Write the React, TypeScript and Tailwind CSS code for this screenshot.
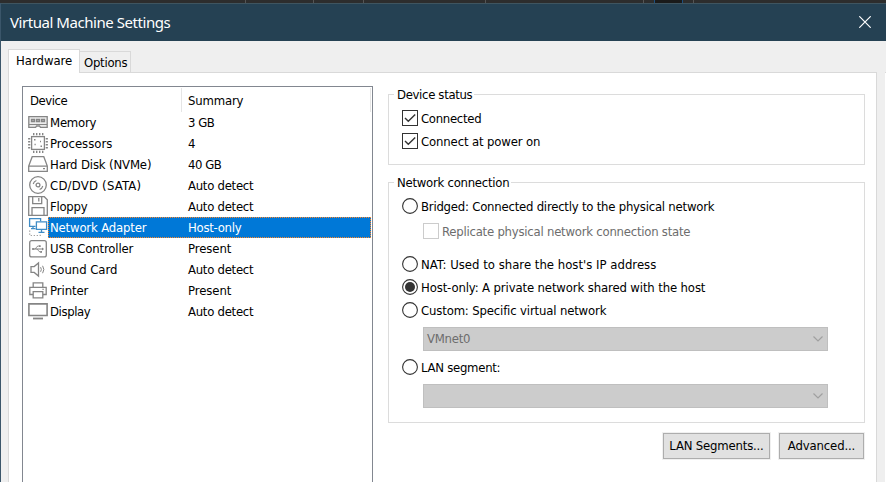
import { ReactNode, useLayoutEffect, useRef, useState } from "react";

const BODY = "font-['DejaVu_Sans_Condensed','DejaVu_Sans',sans-serif] [font-stretch:condensed] text-[13px]";

/* A single-line label whose tracking is adjusted so it spans `w` pixels. */
function Label({ children, w, className = "" }: { children: string; w: number; className?: string }) {
  const ref = useRef<HTMLSpanElement>(null);
  const [tracking, setTracking] = useState(0);
  useLayoutEffect(() => {
    const el = ref.current;
    if (!el) return;
    const natural = el.getBoundingClientRect().width - tracking * children.length;
    setTracking((w + 0.3 - natural) / children.length);
  }, [children, w]);
  return (
    <span ref={ref} className={`inline-block whitespace-pre ${className}`} style={{ letterSpacing: `${tracking}px` }}>
      {children}
    </span>
  );
}

function Glyph({ children, color = "#858585" }: { children: ReactNode; color?: string }) {
  return (
    <svg width="20" height="21" viewBox="0 0 20 21" fill="none" stroke={color} strokeWidth="1.3" className="shrink-0">
      {children}
    </svg>
  );
}

const icons: Record<string, ReactNode> = {
  memory: (
    <Glyph>
      <path d="M.8 4.7h18.4v10.6h-6.7l-1-1.3H8.6l-1 1.3H.8z" fill="#ececec" />
      <path d="M1 12.5h18" strokeWidth="1" />
      <path d="M3.5 7.5h3v2h-3zM8.5 7.5h3v2h-3zM13.5 7.5h3v2h-3z" fill="#c8c8c8" />
    </Glyph>
  ),
  cpu: (
    <Glyph>
      <rect x="3.6" y="3.6" width="12.8" height="12.8" />
      <path d="M5 1.2h11M5 18.8h11" strokeWidth="2.2" strokeDasharray="1.4 1.6" />
      <path d="M1.2 5v11M18.8 5v11" strokeWidth="2.2" strokeDasharray="1.4 1.6" />
      <path d="M6 6.7h1.5M12.5 13.3h1.5M6.5 11.5h1.2M12 8.5h1" strokeWidth="1.5" />
    </Glyph>
  ),
  disk: (
    <Glyph>
      <path d="M4.2 2.7h11.6L19.3 12v5.3H.7V12zM.7 12.2h18.6" />
      <path d="M15 14.7h2" />
    </Glyph>
  ),
  cd: (
    <Glyph>
      <circle cx="10" cy="10" r="8.3" />
      <circle cx="10" cy="10" r="1.9" />
      <path d="M5.2 9a5 5 0 0 1 3.2-3.5M14.8 11a5 5 0 0 1-3.2 3.5" strokeWidth="1.1" />
    </Glyph>
  ),
  floppy: (
    <Glyph>
      <path d="M.7.7h15.6l3 3v15.6H.7zM4.7.7v7h9v-7M4 19V11.6h12V19M10.8 2v3.4" />
    </Glyph>
  ),
  network: (
    <Glyph color="#3f8cc6">
      <path d="M7.5 9.3H1.6V1.6h11v2.6" />
      <path d="M3 11.6h4.5M5 9.3v2.3" />
      <path d="M8.4 4.8h10.2v7.6H8.4z" fill="#fff" />
      <path d="M13.5 12.5v2.3M10.5 15.3h6" />
      <path d="M1.7 13.5v5h10.5v-2" stroke="#9a9a9a" strokeDasharray="1.2 1.8" strokeWidth="1.2" />
    </Glyph>
  ),
  usb: (
    <Glyph>
      <rect x="1.7" y="2.7" width="16.6" height="16.2" rx="2" />
      <path d="M5 11h9.5M6.5 11c2 0 1.7-3 4-3h1M8.5 11c2 0 1.7 3 4 3h1" strokeWidth="1" />
      <path d="M14 9.6l2.1 1.4-2.1 1.4zM11 7.2h1.7v1.7H11zM12.3 13.1H14v1.7h-1.7z" fill="#858585" stroke="none" />
      <circle cx="5" cy="11" r="1.1" fill="#858585" stroke="none" />
    </Glyph>
  ),
  sound: (
    <Glyph>
      <path d="M3 7.6h3.2l4.3-3.6v13l-4.3-3.6H3z" />
      <path d="M12.6 8.2q1.5 2.3 0 4.6M14.6 6.8q2.5 3.7 0 7.4" strokeWidth="1" />
    </Glyph>
  ),
  printer: (
    <Glyph>
      <path d="M5.2 7V2.8h9.6V7M5 14.5H1.8V7.3h16.4v7.2H15" />
      <path d="M5.2 11.7h9.6v6.1H5.2z" />
      <path d="M14.3 9.3h1.6" strokeWidth="1.1" />
    </Glyph>
  ),
  display: (
    <Glyph>
      <path d="M.9 2.9h18.2v11.6H.9z" strokeWidth="1.6" />
      <path d="M5 17.5h10" strokeWidth="1.8" />
    </Glyph>
  ),
};

const devices: [string, string, number, string, number][] = [
  ["memory", "Memory", 46, "3 GB", 26],
  ["cpu", "Processors", 62, "4", 7],
  ["disk", "Hard Disk (NVMe)", 101, "40 GB", 33],
  ["cd", "CD/DVD (SATA)", 91, "Auto detect", 65],
  ["floppy", "Floppy", 37, "Auto detect", 65],
  ["network", "Network Adapter", 96, "Host-only", 53],
  ["usb", "USB Controller", 83, "Present", 43],
  ["sound", "Sound Card", 67, "Auto detect", 65],
  ["printer", "Printer", 38, "Present", 43],
  ["display", "Display", 40, "Auto detect", 65],
];

function DeviceRow({ row, selected }: { row: (typeof devices)[number]; selected: boolean }) {
  const [icon, name, nameW, summary, summaryW] = row;
  return (
    <div className="flex h-[21px] pl-[5px] leading-[21px]">
      {icons[icon]}
      <div
        className={`flex flex-1 ${
          selected ? "bg-[#0078d7] text-white outline-1 -outline-offset-1 outline-dotted outline-[#ff8728]" : ""
        }`}
      >
        <div className="w-[138px] pl-[2px]">
          <Label w={nameW}>{name}</Label>
        </div>
        <div className="pl-[2px]">
          <Label w={summaryW}>{summary}</Label>
        </div>
      </div>
      <div className="w-px" />
    </div>
  );
}

function Check({ label, w, checked, disabled }: { label: string; w: number; checked?: boolean; disabled?: boolean }) {
  return (
    <div className={`flex h-4 items-center gap-[3px] ${disabled ? "text-[#6d6d6d]" : ""}`}>
      <span className={`flex size-4 shrink-0 border ${disabled ? "border-[#cccccc]" : "border-[#333333]"}`}>
        {checked && (
          <svg width="14" height="14" viewBox="0 0 14 14" fill="none" stroke="#333" strokeWidth="1.4">
            <path d="M2 7l3.3 3.3L12.2 3.4" />
          </svg>
        )}
      </span>
      <Label w={w} className="leading-[17px]">{label}</Label>
    </div>
  );
}

function Radio({ label, w, checked }: { label: string; w: number; checked?: boolean }) {
  return (
    <div className="flex h-4 items-center gap-[3px]">
      <svg width="16" height="16" viewBox="0 0 16 16" className="shrink-0">
        <circle cx="8" cy="8" r="7.4" fill="#fff" stroke="#333" strokeWidth="1.1" />
        {checked && <circle cx="8" cy="8" r="5" fill="#333" />}
      </svg>
      <Label w={w} className="leading-[17px]">{label}</Label>
    </div>
  );
}

function Combo({ children }: { children?: ReactNode }) {
  return (
    <div className="ml-[21px] flex h-6 w-[405px] items-center justify-between border border-[#bfbfbf] bg-[#cccccc] pr-[4px] pl-[3px] text-[#6d6d6d]">
      <span className="leading-[24px]">{children}</span>
      <svg width="10" height="6" viewBox="0 0 10 6" fill="none" stroke="#a0a0a0" strokeWidth="1.2">
        <path d="M.5.5L5 5 9.5.5" />
      </svg>
    </div>
  );
}

function Group({ title, w, className, children }: { title: string; w: number; className: string; children: ReactNode }) {
  return (
    <fieldset className={`w-[477px] border border-[#dcdcdc] pl-[13px] ${className}`}>
      <legend className="-ml-[8px] h-[15px] pr-[2px] pl-[3px] leading-[15px]">
        <Label w={w}>{title}</Label>
      </legend>
      {children}
    </fieldset>
  );
}

function Button({ label, w, className }: { label: string; w: number; className: string }) {
  return (
    <button
      className={`flex h-[26px] items-center justify-center border border-[#adadad] bg-[#e1e1e1] leading-[26px] outline-1 outline-[#f0f0f0] ${className}`}
    >
      <Label w={w}>{label}</Label>
    </button>
  );
}

export default function App() {
  return (
    <div className={`flex h-[482px] w-[886px] flex-col overflow-hidden bg-[#efefef] text-black ${BODY}`}>
      {/* sliver of the window behind */}
      <div className="flex h-[3px] shrink-0 bg-[#2d2d2d]">
        <div className="w-[246px] border-r border-[#555]" />
        <div className="w-[68px] border-r border-[#555]" />
        <div className="w-[50px] border-r border-[#555]" />
        <div className="w-[122px] border-r border-[#555]" />
        <div className="w-[158px] border-r border-[#555]" />
        <div className="w-[10px]" />
        <div className="w-[29px] border-x border-[#1c5080] bg-[#1a1a1a]" />
        <div className="w-[11px] border-r border-[#555]" />
      </div>

      <div className="flex min-h-0 flex-1 flex-col border-l border-[#3b566a]">
        <header className="flex h-[38px] shrink-0 items-center justify-between border-t border-[#3f5560] bg-[#254153] pr-[15px] pl-[9px] text-white">
          <Label w={160} className="mb-[2px] font-['Noto_Sans',sans-serif] text-[15px] leading-[34px]">
            Virtual Machine Settings
          </Label>
          <svg width="12" height="12" viewBox="0 0 12 12" stroke="#fff" strokeWidth="1.2" className="mb-px">
            <path d="M.3.3l11.4 11.4M11.7.3L.3 11.7" />
          </svg>
        </header>

        <div className="relative z-10 flex h-8 shrink-0 items-end pl-[7px]">
          <div className="h-6 w-[72px] border-x border-t border-[#d9d9d9] bg-white pl-[7px] leading-[21px]">
            <Label w={56}>Hardware</Label>
          </div>
          <div className="mb-px h-[21px] w-[51px] border-t border-r border-[#d9d9d9] pl-[4px] leading-[21px]">
            <Label w={43}>Options</Label>
          </div>
        </div>

        <div className="-mt-px flex min-h-0 flex-1">
          <div className="ml-[7px] flex w-[869px] shrink-0 gap-[15px] border-x border-t border-[#d9d9d9] bg-white pt-[13px] pl-[13px]">
            <div className="w-[351px] shrink-0 border-x border-t border-[#828790]">
              <div className="flex h-[25px] pt-[1px] leading-[25px]">
                <div className="h-6 w-[159px] border-r border-[#e5e5e5] pl-[7px]">
                  <Label w={37}>Device</Label>
                </div>
                <div className="h-6 w-[189px] border-r border-[#e5e5e5] pl-[6px]">
                  <Label w={55}>Summary</Label>
                </div>
              </div>
              {devices.map((row) => (
                <DeviceRow key={row[1]} row={row} selected={row[0] === "network"} />
              ))}
            </div>

            <div className="flex flex-col pt-px">
              <Group title="Device status" w={75} className="h-[78px]">
                <div className="flex flex-col gap-[7px] pt-2">
                  <Check label="Connected" w={60} checked />
                  <Check label="Connect at power on" w={119} checked />
                </div>
              </Group>
              <Group title="Network connection" w={112} className="mt-[10px] h-[248px]">
                <div className="flex flex-col pt-2">
                  <Radio label="Bridged: Connected directly to the physical network" w={293} />
                  <div className="mt-[9px] ml-[21px]">
                    <Check label="Replicate physical network connection state" w={248} disabled />
                  </div>
                  <div className="mt-[17px] flex flex-col gap-[7px]">
                    <Radio label="NAT: Used to share the host's IP address" w={235} />
                    <Radio label="Host-only: A private network shared with the host" w={284} checked />
                    <Radio label="Custom: Specific virtual network" w={185} />
                  </div>
                  <div className="mt-[9px] mb-2">
                    <Combo>
                      <Label w={43}>VMnet0</Label>
                    </Combo>
                  </div>
                  <Radio label="LAN segment:" w={79} />
                  <div className="mt-[9px]">
                    <Combo />
                  </div>
                </div>
              </Group>
              <div className="mt-[10px] flex justify-end gap-[9px] pr-px">
                <Button label="LAN Segments..." w={94} className="w-[107px]" />
                <Button label="Advanced..." w={67} className="w-[85px]" />
              </div>
            </div>
          </div>
          <div className="ml-2 w-px shrink-0 border-t border-[#d9d9d9] bg-white" />
        </div>
      </div>
    </div>
  );
}
